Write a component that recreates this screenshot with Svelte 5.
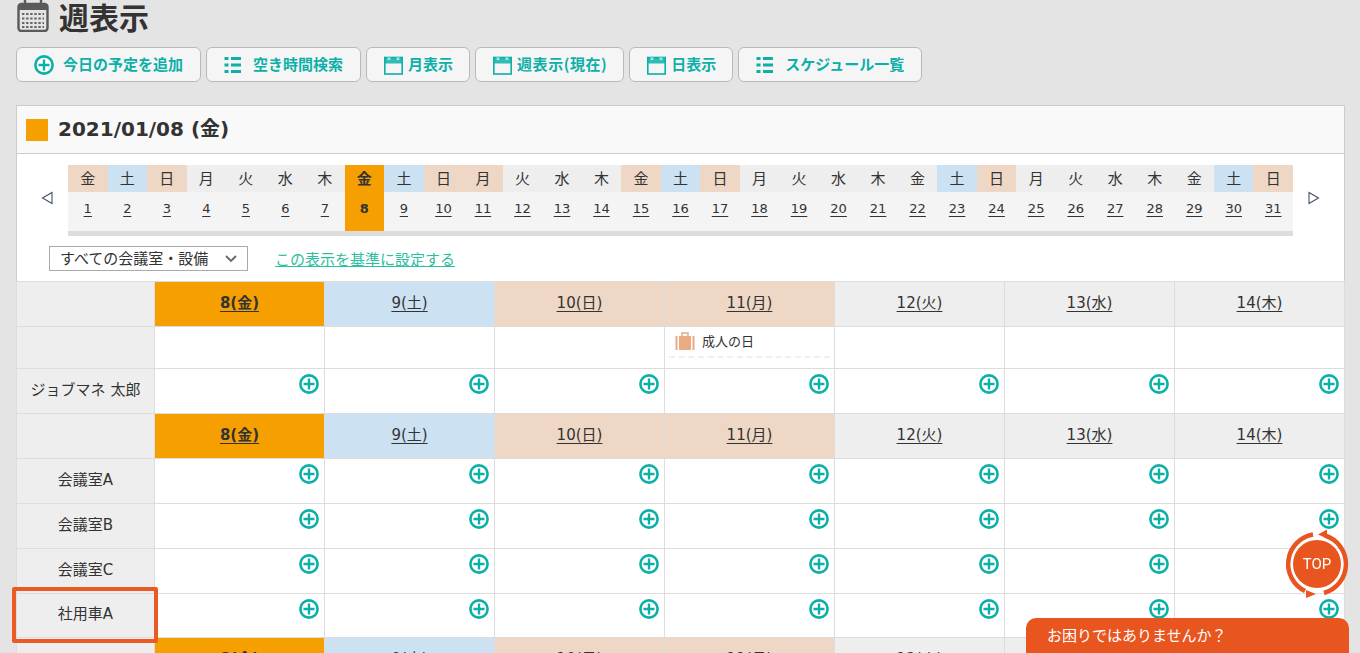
<script lang="ts">
	const teal = '#0cb0a8';
	const names = ['金', '土', '日', '月', '火', '水', '木'];
	const peach = [1, 3, 10, 11, 15, 17, 24, 31];
	const days = Array.from({ length: 31 }, (_, i) => {
		const n = i + 1;
		const name = names[i % 7];
		let tone = '';
		if (n === 8) tone = 'today';
		else if (peach.includes(n)) tone = 'peach';
		else if (name === '土') tone = 'blue';
		return { n, name, tone };
	});

	const week = [
		{ label: '8(金)', tone: 'today' },
		{ label: '9(土)', tone: 'blue' },
		{ label: '10(日)', tone: 'peach' },
		{ label: '11(月)', tone: 'peach' },
		{ label: '12(火)', tone: '' },
		{ label: '13(水)', tone: '' },
		{ label: '14(木)', tone: '' }
	];

	const rooms = ['会議室A', '会議室B', '会議室C', '社用車A'];

	const buttons = [
		{ icon: 'plus', label: '今日の予定を追加' },
		{ icon: 'list', label: '空き時間検索' },
		{ icon: 'cal', label: '月表示' },
		{ icon: 'cal wide', label: '週表示(現在)' },
		{ icon: 'cal', label: '日表示' },
		{ icon: 'list', label: 'スケジュール一覧' }
	];
</script>

{#snippet plus(size)}
	<svg class="plus" width={size} height={size} viewBox="0 0 20 20">
		<circle cx="10" cy="10" r="8.6" fill="#fff" stroke={teal} stroke-width="2.6" />
		<path d="M10 4.500v11M4.500 10h11" stroke={teal} stroke-width="2.4" />
	</svg>
{/snippet}

{#snippet weekHead()}
	<tr class="head">
		<th class="side"></th>
		{#each week as d}
			<th class={d.tone}><a href="#w">{d.label}</a></th>
		{/each}
	</tr>
{/snippet}

{#snippet addCells()}
	{#each week as _}
		<td class="slot">{@render plus(20)}</td>
	{/each}
{/snippet}

<div class="page">
	<h1>
		<svg width="32" height="32" viewBox="0 0 32 32">
			<rect x="1.500" y="4" width="29" height="27" rx="3" fill="#e4e4e4" stroke="#5a5a5a" stroke-width="2.400" />
			<rect x="1.500" y="4" width="29" height="6" fill="#5a5a5a" />
			<path d="M8 0v7M24 0v7" stroke="#5a5a5a" stroke-width="2.400" />
			<path d="M5 14h22M5 18.500h22M5 23h22M5 27h22" stroke="#666" stroke-width="2.200" stroke-dasharray="2.400 1.700" />
		</svg>
		週表示
	</h1>

	<div class="toolbar">
		{#each buttons as b}
			<button type="button" class={b.icon}>
				{#if b.icon === 'plus'}
					{@render plus(20)}
				{:else if b.icon === 'list'}
					<svg width="18" height="18" viewBox="0 0 18 18" fill={teal}>
						<rect x="0.500" y="1" width="4" height="3" /><rect x="7" y="1" width="10" height="3" />
						<rect x="0.500" y="7.500" width="4" height="3" /><rect x="7" y="7.500" width="10" height="3" />
						<rect x="0.500" y="14" width="4" height="3" /><rect x="7" y="14" width="10" height="3" />
					</svg>
				{:else}
					<svg width="19" height="20" viewBox="0 0 19 20">
						<rect x="0.500" y="2.500" width="18" height="6" fill="#2dbdb4" />
						<rect x="0.800" y="2.500" width="17.400" height="16.500" fill="none" stroke={teal} stroke-width="1.600" />
						<path d="M5 1v4M14 1v4" stroke="#fff" stroke-width="2.400" />
						<path d="M5 1v3.500M14 1v3.500" stroke={teal} stroke-width="1" />
					</svg>
				{/if}
				<span>{b.label}</span>
			</button>
		{/each}
	</div>

	<div class="date-title"><i></i><span>2021/01/08 (金)</span></div>

	<div class="panel">
		<div class="strip">
			<svg class="arrow" width="12" height="14" viewBox="0 0 12 14">
				<path d="M11 1.500v11L1.500 7z" fill="none" stroke="#445066" stroke-width="1.100" />
			</svg>
			<div class="month">
				{#each days as d}
					<div class="day {d.tone}">
						<span class="name">{d.name}</span>
						<a class="num" href="#d">{d.n}</a>
					</div>
				{/each}
			</div>
			<svg class="arrow next" width="12" height="14" viewBox="0 0 12 14">
				<path d="M1 1.500v11L10.500 7z" fill="none" stroke="#445066" stroke-width="1.100" />
			</svg>
		</div>
		<div class="filter">
			<div class="select">
				<select>
					<option>すべての会議室・設備</option>
				</select>
				<svg width="12" height="8" viewBox="0 0 12 8">
					<path d="M1 1l5 5 5-5" fill="none" stroke="#666" stroke-width="1.800" />
				</svg>
			</div>
			<a href="#base">この表示を基準に設定する</a>
		</div>
	</div>

	<table>
		<tbody>
			{@render weekHead()}
			<tr class="holiday">
				<td class="side"></td>
				{#each week as d}
					<td>
						{#if d.label === '11(月)'}
							<div class="event">
								<svg width="20" height="18" viewBox="0 0 20 18" fill="#eaaa82">
									<rect x="0.500" y="4" width="2" height="14" />
									<rect x="4" y="4" width="12" height="14" />
									<rect x="17.500" y="4" width="2" height="14" />
									<path d="M7 4V1h6v3" fill="none" stroke="#eaaa82" stroke-width="1.500" />
								</svg>
								成人の日
							</div>
						{/if}
					</td>
				{/each}
			</tr>
			<tr class="person">
				<td class="side">ジョブマネ 太郎</td>
				{@render addCells()}
			</tr>
			{@render weekHead()}
			{#each rooms as room}
				<tr class="room" class:short={room === '社用車A'}>
					<td class="side">
						{room}
						{#if room === '社用車A'}
							<div class="mark"></div>
						{/if}
					</td>
					{@render addCells()}
				</tr>
			{/each}
			{@render weekHead()}
		</tbody>
	</table>

	<svg class="top" width="66" height="70" viewBox="0 0 66 70">
		<circle cx="33" cy="35" r="24" fill="#e9551f" />
		<path d="M29 5.500A30 30 0 0 0 21 62" fill="none" stroke="#e9551f" stroke-width="4.500" />
		<path d="M41 6.500A30 30 0 0 1 40 64" fill="none" stroke="#e9551f" stroke-width="4.500" />
		<path d="M34 5.500l9-5v9zM32 65l-10 4v-8z" fill="#e9551f" />
		<text x="33" y="40" text-anchor="middle">TOP</text>
	</svg>

	<div class="help">お困りではありませんか？</div>
</div>

<style>
	:global(html),
	:global(body) {
		overflow: hidden;
		height: 653px;
	}

	:global(body) {
		background: #e4e4e4;
	}

	.page {
		box-sizing: border-box;
		height: 653px;
		padding: 0 15px 0 16px;
		overflow: hidden;
		color: #333;
		font-family: 'DejaVu Sans', 'Noto Sans CJK JP', sans-serif;
	}

	h1 {
		display: flex;
		align-items: center;
		gap: 10px;
		height: 32px;
		margin: 0;
		padding-left: 1px;
		font-size: 30px;
		line-height: 32px;
		font-family: 'Noto Sans CJK JP', sans-serif;
		font-weight: 700;
	}

	.toolbar {
		display: flex;
		gap: 5px;
		margin-top: 15px;
	}

	.toolbar button {
		display: flex;
		align-items: center;
		gap: 5px;
		box-sizing: border-box;
		height: 35px;
		padding: 0 17px;
		background: #f5f5f5;
		border: 1px solid #b9b9b9;
		border-radius: 6px;
		color: #0cb0a8;
		font-family: 'Noto Sans CJK JP', sans-serif;
		font-size: 15px;
		font-weight: 700;
		white-space: nowrap;
	}

	.toolbar button span {
		margin-bottom: 2px;
	}

	.toolbar button.plus {
		gap: 9px;
	}

	.toolbar button.plus svg {
		margin-top: 1px;
	}

	.toolbar button.list {
		gap: 11px;
	}

	.toolbar button.cal {
		padding-right: 16px;
	}

	.toolbar button.wide span {
		letter-spacing: 0.55px;
	}

	.plus {
		flex: none;
		display: block;
	}

	.date-title {
		display: flex;
		align-items: center;
		gap: 10px;
		box-sizing: border-box;
		height: 49px;
		margin-top: 23px;
		padding-left: 9px;
		background: #f9f9f9;
		border: 1px solid #ccc;
		font-size: 20px;
		font-weight: 700;
	}

	.date-title span {
		margin-bottom: 4px;
	}

	.date-title i {
		width: 22px;
		height: 22px;
		background: #f5a000;
	}

	.panel {
		box-sizing: border-box;
		height: 127px;
		padding-top: 11px;
		background: #fff;
		border-right: 1px solid #ccc;
		border-left: 1px solid #ccc;
	}

	.strip {
		display: grid;
		grid-template-columns: 51px 1225px 1fr;
		align-items: center;
		justify-items: center;
	}

	.arrow {
		margin: 0 0 6px 8px;
	}

	.arrow.next {
		margin: 0 10px 6px 0;
	}

	.month {
		display: grid;
		grid-template-columns: repeat(31, 1fr);
		justify-self: stretch;
		background: #f4f4f4;
		border-bottom: 5px solid #ddd;
	}

	.day {
		display: flex;
		flex-direction: column;
		align-items: center;
	}

	.name {
		width: 100%;
		height: 27px;
		background: #eee;
		font-family: 'Noto Sans CJK JP', sans-serif;
		font-size: 15px;
		line-height: 25px;
		text-align: center;
	}

	.num {
		height: 39px;
		color: #333;
		font-size: 13px;
		line-height: 33px;
		text-underline-offset: 3px;
	}

	.day.peach .name {
		background: #efd7c5;
	}

	.day.blue .name {
		background: #cce2f3;
	}

	.day.today {
		background: #f5a000;
	}

	.day.today .name {
		background: none;
		font-weight: 700;
	}

	.day.today .num {
		font-weight: 700;
		text-decoration: none;
	}

	.filter {
		display: flex;
		align-items: center;
		gap: 27px;
		margin: 10px 0 0 32px;
	}

	.select {
		position: relative;
		width: 199px;
		height: 25px;
	}

	.select select {
		appearance: none;
		box-sizing: border-box;
		width: 100%;
		height: 100%;
		padding: 0 0 2px 10px;
		background: #fff;
		border: 1px solid #aaa;
		border-radius: 0;
		color: #333;
		font-family: 'Noto Sans CJK JP', sans-serif;
		font-size: 15px;
	}

	.select svg {
		position: absolute;
		top: 9px;
		right: 11px;
	}

	.filter a {
		color: #2cbfa0;
		font-family: 'Noto Sans CJK JP', sans-serif;
		font-size: 15px;
	}

	table {
		width: 1328px;
		border-collapse: collapse;
		table-layout: fixed;
		background: #fff;
	}

	th,
	td {
		box-sizing: border-box;
		padding: 0;
		border: 1px solid #ddd;
		width: 170px;
		font-weight: 400;
	}

	.side {
		width: 138px;
		background: #eee;
		font-family: 'DejaVu Sans', 'Noto Sans CJK JP', sans-serif;
		font-size: 15px;
		text-align: center;
	}

	td.side {
		position: relative;
		padding-bottom: 6px;
	}

	.head {
		height: 45px;
	}

	.head th {
		padding-bottom: 5px;
		background: #eee;
		font-size: 15px;
	}

	.head th a {
		color: #333;
		text-underline-offset: 3px;
	}

	.head th.today {
		background: #f5a000;
		font-weight: 700;
	}

	.head th.blue {
		background: #cce2f3;
	}

	.head th.peach {
		background: #efd7c5;
	}

	.holiday {
		height: 42px;
	}

	.holiday td {
		vertical-align: top;
	}

	.event {
		display: flex;
		align-items: flex-start;
		gap: 7px;
		box-sizing: border-box;
		height: 31px;
		margin: 0 4px;
		padding: 5px 0 0 6px;
		border-bottom: 2px dashed #f0f0f0;
		font-family: 'Noto Sans CJK JP', sans-serif;
		font-size: 13px;
		line-height: 18px;
	}

	.person,
	.room {
		height: 45px;
	}

	.room.short {
		height: 44px;
	}

	.slot {
		vertical-align: top;
	}

	.slot .plus {
		margin: 5px 5px 0 auto;
	}

	.mark {
		position: absolute;
		top: -7px;
		right: -4px;
		bottom: -6px;
		left: -5px;
		border: 4px solid #ec5a24;
		border-radius: 2px;
	}

	.top {
		position: fixed;
		top: 529px;
		left: 1284px;
	}

	.top text {
		fill: #fff;
		font-family: Roboto, sans-serif;
		font-size: 15px;
	}

	.help {
		position: fixed;
		top: 618px;
		left: 1026px;
		box-sizing: border-box;
		width: 323px;
		height: 35px;
		padding-left: 21px;
		background: #e9551f;
		border-radius: 10px 10px 0 0;
		color: #fff;
		font-family: 'Noto Sans CJK JP', sans-serif;
		font-size: 15px;
		line-height: 34px;
	}
</style>
